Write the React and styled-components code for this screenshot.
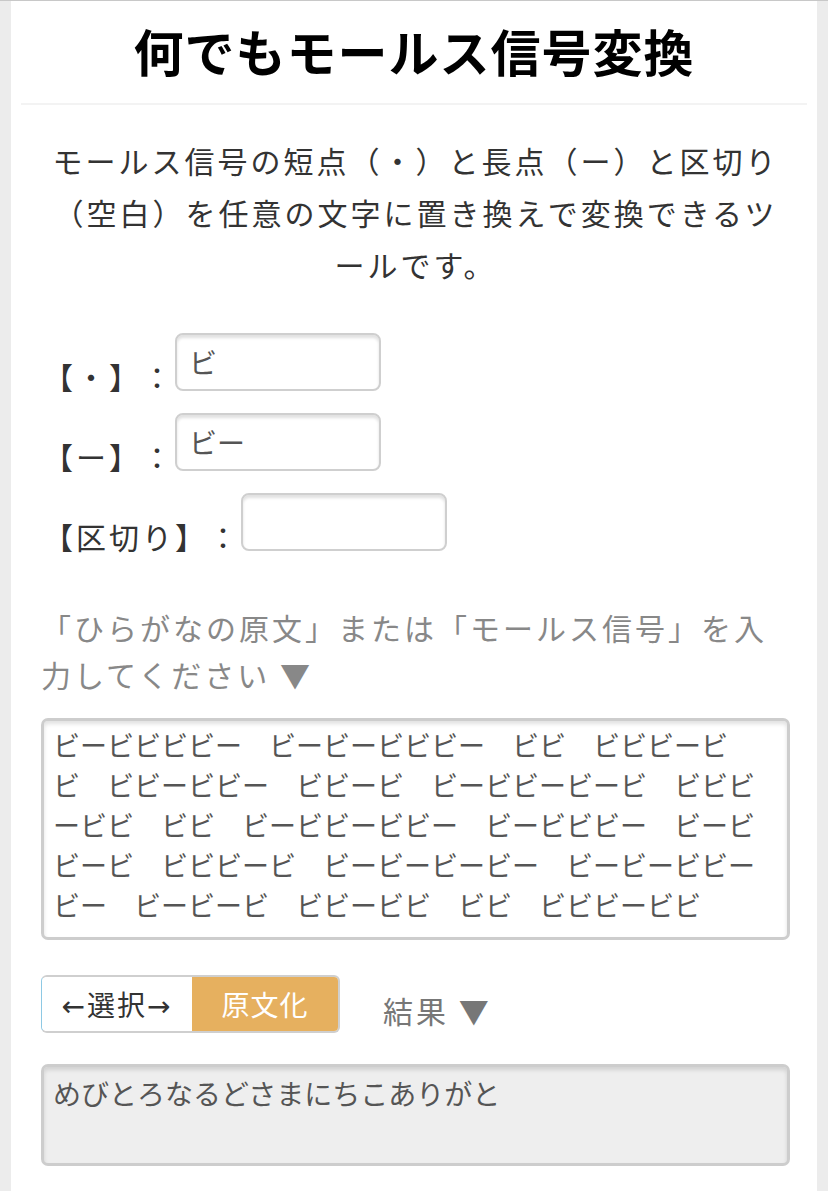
import React from "react"
import styled, { createGlobalStyle } from "styled-components"

const GlobalStyle = createGlobalStyle`
  html, body {
    margin: 0;
    padding: 0;
    background: #ececec;
  }
  body {
    font-family: "Noto Sans CJK JP", "Noto Sans", sans-serif;
    border-top: 1px solid #c8c8c8;
  }
`

const Card = styled.div`
  background: #fff;
  margin: 0 11px;
  padding: 0 10px 40px;
  min-height: 1200px;
  box-sizing: border-box;
`

const Header = styled.div`
  border-bottom: 2px solid #f3f3f3;
`

const Title = styled.h1`
  margin: 0;
  height: 102px;
  line-height: 98px;
  text-align: center;
  font-size: 50px;
  font-weight: 700;
  letter-spacing: 1px;
  color: #000;
`

const Body = styled.div`
  display: flex;
  flex-direction: column;
  padding: 0 17px 0 20px;
`

const Description = styled.p`
  margin: 29px 0 0;
  font-size: 30px;
  line-height: 52px;
  letter-spacing: 3px;
  color: #333;
  text-align: center;
  line-break: loose;
`

const Settings = styled.div`
  display: flex;
  flex-direction: column;
  gap: 22px;
  margin-top: 43px;
`

const Row = styled.div`
  display: flex;
  align-items: flex-end;
  padding-left: 2px;
`

const Label = styled.span`
  font-size: 30px;
  line-height: 30px;
  letter-spacing: 3px;
  color: #333;
  white-space: nowrap;
`

const Colon = styled.span`
  margin-left: 15px;
`

const TextInput = styled.input`
  width: 206px;
  height: 58px;
  box-sizing: border-box;
  border: 2px solid #cfcfcf;
  border-radius: 8px;
  box-shadow: inset 0 3px 3px rgba(0, 0, 0, 0.12);
  padding: 0 12px;
  font-family: inherit;
  font-size: 28px;
  color: #555;
  outline: none;
  background: #fff;
`

const Prompt = styled.p`
  margin: 53px 0 0;
  font-size: 30px;
  line-height: 47px;
  letter-spacing: 3px;
  color: #888;
`

const Area = styled.textarea`
  display: block;
  width: 100%;
  height: ${p => p.$height}px;
  box-sizing: border-box;
  margin-top: ${p => p.$top}px;
  border: 3px solid #cdcdcd;
  border-radius: 7px;
  box-shadow: inset 0 3px 4px rgba(0, 0, 0, 0.12);
  padding: ${p => p.$padTop}px 10px 0 9px;
  font-family: inherit;
  font-size: ${p => p.$size}px;
  line-height: 40px;
  color: #555;
  background: ${p => (p.$muted ? "#eeeeee" : "#fff")};
  resize: none;
  overflow: hidden;
  outline: none;
`

const Actions = styled.div`
  display: flex;
  align-items: center;
  margin-top: 35px;
`

const Toggle = styled.div`
  display: flex;
  height: 58px;
  box-sizing: border-box;
  border: 2px solid #cfcfcf;
  border-left: 1px solid #8ec9e4;
  border-radius: 6px;
  overflow: hidden;
`

const Segment = styled.div`
  display: flex;
  align-items: center;
  justify-content: center;
  width: ${p => p.$width}px;
  font-family: "DejaVu Sans", "Noto Sans CJK JP", sans-serif;
  font-size: 28px;
  color: ${p => (p.$active ? "#fff" : "#333")};
  background: ${p => (p.$active ? "#e6b05f" : "#fff")};
  letter-spacing: ${p => (p.$active ? "1px" : "2px")};
`

const ResultLabel = styled.span`
  margin: 12px 0 0 43px;
  font-size: 30px;
  letter-spacing: 3px;
  color: #777;
`

const morse = [
  "ビービビビビー　ビービービビビー　ビビ　ビビビービ",
  "ビ　ビビービビー　ビビービ　ビービビービービ　ビビビ",
  "ービビ　ビビ　ビービビービビー　ビービビビー　ビービ",
  "ビービ　ビビビービ　ビービービービー　ビービービビー",
  "ビー　ビービービ　ビビービビ　ビビ　ビビビービビ",
].join("\n")

export default function App() {
  return (
    <>
      <GlobalStyle />
      <Card>
        <Header>
          <Title>何でもモールス信号変換</Title>
        </Header>
        <Body>
          <Description>
            モールス信号の短点（・）と長点（ー）と区切り（空白）を任意の文字に置き換えで変換できるツールです。
          </Description>
          <Settings>
            <Row>
              <Label>【・】<Colon>：</Colon></Label>
              <TextInput defaultValue="ビ" />
            </Row>
            <Row>
              <Label>【ー】<Colon>：</Colon></Label>
              <TextInput defaultValue="ビー" />
            </Row>
            <Row>
              <Label>【区切り】<Colon>：</Colon></Label>
              <TextInput defaultValue="" />
            </Row>
          </Settings>
          <Prompt>「ひらがなの原文」または「モールス信号」を入力してください ▼</Prompt>
          <Area
            $top={20}
            $height={222}
            $size={27}
            $padTop={4}
            readOnly
            defaultValue={morse}
          />
          <Actions>
            <Toggle>
              <Segment $width={150}>←選択→</Segment>
              <Segment $width={146} $active>原文化</Segment>
            </Toggle>
            <ResultLabel>結果 ▼</ResultLabel>
          </Actions>
          <Area
            $top={31}
            $height={102}
            $size={28}
            $padTop={6}
            $muted
            readOnly
            defaultValue="めびとろなるどさまにちこありがと"
          />
        </Body>
      </Card>
    </>
  )
}
